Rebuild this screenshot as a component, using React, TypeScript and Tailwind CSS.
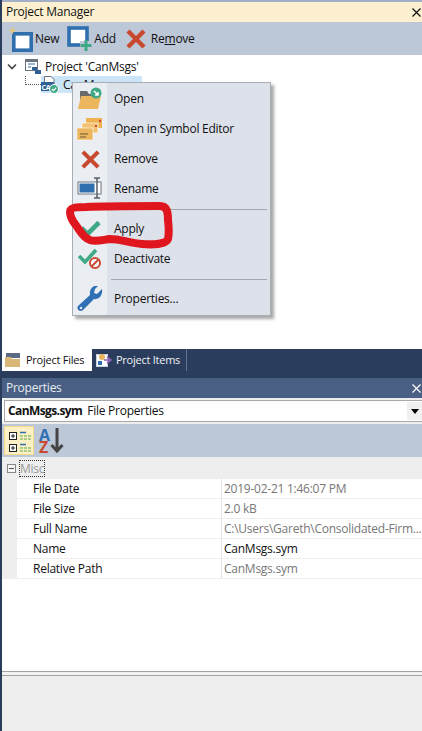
import React from "react";

const font = { fontFamily: '"Open Sans", "Noto Sans", sans-serif' };

function XIcon({ size = 22 }: { size?: number }) {
  return (
    <svg width={size} height={size} viewBox="0 0 22 22">
      <path d="M3 3 L19 19 M19 3 L3 19" stroke="#c8492f" strokeWidth="4.4" fill="none" />
    </svg>
  );
}

function NewIcon() {
  return (
    <svg width="26" height="26" viewBox="0 0 26 26">
      <rect x="5.8" y="7.8" width="17.4" height="16.4" fill="#fff" stroke="#2f6fae" strokeWidth="3.6" />
      <path d="M4.5 0.5 L5.6 3.4 L8.5 4.5 L5.6 5.6 L4.5 8.5 L3.4 5.6 L0.5 4.5 L3.4 3.4 Z" fill="#e7c77a" />
    </svg>
  );
}

function AddIcon() {
  return (
    <svg width="26" height="26" viewBox="0 0 26 26">
      <rect x="2" y="2" width="18" height="17" fill="#fff" stroke="#2f6fae" strokeWidth="3.6" />
      <rect x="13" y="15" width="12" height="10" fill="#bcc7d8" />
      <path d="M19 14 V25 M13.5 19.5 H24.5" stroke="#3fa884" strokeWidth="3" />
    </svg>
  );
}

function FolderOpenIcon() {
  return (
    <svg width="26" height="24" viewBox="0 0 26 24">
      <path d="M3 22 V4 H10 L12 7 H16 V22 Z" fill="#6b6b6b" />
      <path d="M1 22 L4 9 H24 L21 22 Z" fill="#ecb65f" />
      <circle cx="19" cy="6" r="5.5" fill="#3fa884" />
      <path d="M17 4 L21 8 M21 5 V8 H18" stroke="#fff" strokeWidth="1.4" fill="none" />
    </svg>
  );
}

function SymbolsIcon() {
  return (
    <svg width="26" height="24" viewBox="0 0 26 24">
      <rect x="9" y="1" width="16" height="10" fill="#efb04f" />
      <rect x="5" y="6" width="16" height="10" fill="#f2c272" stroke="#fff" strokeWidth="0.6" />
      <rect x="0" y="11" width="16" height="12" fill="#ecb65f" stroke="#fff" strokeWidth="0.6" />
      <path d="M3 17 H11 M3 20 H9" stroke="#6b5a35" strokeWidth="1" />
      <rect x="22" y="3" width="2" height="2" fill="#c8492f" />
      <rect x="18" y="8" width="2" height="2" fill="#c8492f" />
    </svg>
  );
}

function RenameIcon() {
  return (
    <svg width="26" height="24" viewBox="0 0 26 24">
      <rect x="1" y="5" width="23" height="12" fill="#fff" stroke="#6d7480" strokeWidth="1" />
      <rect x="2.5" y="6.5" width="15" height="9" fill="#2f6fae" />
      <path d="M17 1 H23 M20 1 V21 M17 21 H23" stroke="#5b5f66" strokeWidth="1.5" fill="none" />
    </svg>
  );
}

function CheckIcon() {
  return (
    <svg width="22" height="18" viewBox="0 0 22 18">
      <path d="M2.5 8 L8.5 14 L20 2.5" stroke="#3fa884" strokeWidth="4.6" fill="none" />
    </svg>
  );
}

function DeactivateIcon() {
  return (
    <svg width="24" height="22" viewBox="0 0 24 22">
      <path d="M1 8 L7 14 L18 2" stroke="#3fa884" strokeWidth="3.6" fill="none" />
      <circle cx="17" cy="15" r="5" fill="#fff" stroke="#c8492f" strokeWidth="2" />
      <path d="M13.5 18.5 L20.5 11.5" stroke="#c8492f" strokeWidth="2" />
    </svg>
  );
}

function WrenchIcon() {
  return (
    <svg width="26" height="26" viewBox="0 0 26 26">
      <path
        d="M25 3 L20 8 L17 7 L18 3 L21 0 C16 -1 12 3 13 9 L1 20 C-1 23 3 27 6 24 L17 13 C22 14 26 9 25 3 Z"
        fill="#2f6fb5"
      />
      <circle cx="4" cy="22" r="1.3" fill="#dde2ea" />
    </svg>
  );
}

function ProjectIcon() {
  return (
    <svg width="16" height="16" viewBox="0 0 16 16">
      <rect x="0.5" y="0.5" width="12" height="11" fill="#fff" stroke="#6d7480" />
      <rect x="1" y="1" width="11" height="2" fill="#6d7480" />
      <path d="M3 5 H10 M3 8 H6" stroke="#2f6fae" />
      <path d="M7 8 L12 8 L12 11 L16 11 L16 15 L10 15 L10 11 L7 11 Z" fill="#2f5f94" />
    </svg>
  );
}

function SymFileIcon() {
  return (
    <svg width="18" height="18" viewBox="0 0 18 18">
      <path d="M3.5 0.5 H10 L13 3.5 V10 H3.5 Z" fill="#fff" stroke="#6d7480" />
      <rect x="0" y="6" width="13" height="9" fill="#2f5f94" />
      <text x="0.5" y="13.5" fontSize="7" fontWeight="700" fill="#fff" style={font}>
        CAN
      </text>
      <circle cx="13" cy="13" r="4.5" fill="#3fa884" stroke="#fff" />
      <path d="M10.8 13 L12.5 14.7 L15.3 11.6" stroke="#fff" strokeWidth="1.2" fill="none" />
    </svg>
  );
}

function TabFilesIcon() {
  return (
    <svg width="16" height="16" viewBox="0 0 16 16">
      <rect x="1" y="1" width="14" height="5" fill="#5b6b85" />
      <path d="M0 5 H6 L7 7 H15 V15 H0 Z" fill="#d9b778" />
    </svg>
  );
}

function TabItemsIcon() {
  return (
    <svg width="16" height="16" viewBox="0 0 16 16">
      <rect x="0.5" y="2.5" width="11" height="12" fill="#fff" stroke="#c9d1dc" />
      <circle cx="6" cy="5" r="3" fill="#e8b45e" />
      <rect x="2" y="9" width="4" height="4" fill="#2f6fae" />
      <path d="M8 8 L15 8 M11 5 L15 8 L11 11" stroke="#8f62b5" strokeWidth="1.6" fill="none" />
    </svg>
  );
}

function CategorizedIcon() {
  return (
    <svg width="28" height="28" viewBox="0 0 28 28">
      <rect x="4.5" y="5.5" width="7" height="7" fill="#fff" stroke="#222" />
      <path d="M6 9 H10 M8 7 V11" stroke="#222" />
      <rect x="4.5" y="17.5" width="7" height="7" fill="#fff" stroke="#222" />
      <path d="M6 21 H10 M8 19 V23" stroke="#222" />
      <path d="M15 5.5 H21 M15 17.5 H21" stroke="#2f6fae" strokeWidth="1.4" />
      <path d="M15 9 H18 M19 9 H22 M23 9 H26 M15 12 H18 M19 12 H22 M23 12 H26 M15 21 H18 M19 21 H22 M23 21 H26 M15 24 H18 M19 24 H22 M23 24 H26" stroke="#5aa846" strokeWidth="1.2" />
    </svg>
  );
}

function SortIcon() {
  return (
    <svg width="14" height="25" viewBox="0 0 14 25" className="shrink-0">
      <path d="M7 0 V23 M1.5 17 L7 23 L12.5 17" stroke="#444" strokeWidth="3" fill="none" />
    </svg>
  );
}

function MenuRow({ icon, label }: { icon: React.ReactNode; label: string }) {
  return (
    <div className="flex h-[30px] items-center">
      <div className="flex w-[34px] shrink-0 items-center justify-center">{icon}</div>
      <span className="pl-[7px] text-[12px] text-[#111]">{label}</span>
    </div>
  );
}

function Separator() {
  return (
    <div className="flex h-[10px] items-center pl-[38px] pr-[3px]">
      <div className="h-px w-full bg-[#a3a8b0]" />
    </div>
  );
}

const rows: [string, string, string][] = [
  ["File Date", "2019-02-21 1:46:07 PM", "text-[#777]"],
  ["File Size", "2.0 kB", "text-[#777]"],
  ["Full Name", "C:\\Users\\Gareth\\Consolidated-Firm...", "text-[#777]"],
  ["Name", "CanMsgs.sym", "text-[#111]"],
  ["Relative Path", "CanMsgs.sym", "text-[#777]"],
];

export default function App() {
  return (
    <div
      className="relative flex h-[731px] w-[422px] flex-col overflow-hidden border-l-2 border-[#2b3d5c] bg-white text-[12px] tracking-[-0.25px] text-[#111]"
      style={font}
    >
      <div className="h-[2px] shrink-0 bg-[#a3afc6]" />
      <div className="flex h-[20px] shrink-0 items-center justify-between bg-[#fdf0d0] pl-1">
        <span>Project Manager</span>
        <svg width="9" height="9" viewBox="0 0 9 9" className="mr-[1px]">
          <path d="M0.5 0.5 L8.5 8.5 M8.5 0.5 L0.5 8.5" stroke="#111" strokeWidth="1.2" />
        </svg>
      </div>
      <div className="flex h-[33px] shrink-0 items-center bg-[#bcc7d8] pl-[6px]">
        <NewIcon />
        <span className="ml-[1px]">New</span>
        <div className="ml-[8px] flex items-center">
          <AddIcon />
          <span className="ml-[1px]">Add</span>
        </div>
        <div className="ml-[9px] flex items-center">
          <XIcon size={22} />
          <span className="ml-[4px]">
            Re<span className="underline">m</span>ove
          </span>
        </div>
      </div>

      <div className="relative h-[294px] shrink-0 bg-white">
        <div className="flex h-[21px] items-center pt-[2px]">
          <svg width="10" height="8" viewBox="0 0 10 8" className="ml-[5px]">
            <path d="M1 1.5 L5 5.5 L9 1.5" stroke="#444" strokeWidth="1.6" fill="none" />
          </svg>
          <div className="ml-[8px]"><ProjectIcon /></div>
          <span className="ml-[4px]">Project 'CanMsgs'</span>
        </div>
        <div className="flex h-[17px] items-center">
          <div className="ml-[23px] h-[9px] w-[16px] self-start border-b border-l border-dotted border-[#555]" />
          <div className="flex h-[17px] w-[101px] items-center bg-[#cce4f7]">
            <SymFileIcon />
            <span className="ml-[4px]">CanMsgs.sym</span>
          </div>
        </div>
      </div>

      <div className="flex h-[29px] shrink-0 items-start whitespace-nowrap bg-[#2b3d5c] text-[11px]">
        <div className="flex h-[22px] w-[90px] items-center bg-white pl-[3px]">
          <TabFilesIcon />
          <span className="ml-[5px]">Project Files</span>
        </div>
        <div className="flex h-[22px] w-[95px] items-center border-r border-[#5d7296] pl-[4px] text-[#eef1f6]">
          <TabItemsIcon />
          <span className="ml-[4px]">Project Items</span>
        </div>
      </div>

      <div className="flex h-[20px] shrink-0 items-center justify-between bg-[#4a5f84] pl-1 text-[#e8ecf3]">
        <span>Properties</span>
        <svg width="9" height="9" viewBox="0 0 9 9" className="mr-[1px]">
          <path d="M0.5 0.5 L8.5 8.5 M8.5 0.5 L0.5 8.5" stroke="#fff" strokeWidth="1.2" />
        </svg>
      </div>
      <div className="h-[2px] shrink-0 bg-[#eeeeee]" />
      <div className="ml-[2px] flex h-[22px] shrink-0 items-center justify-between border-y border-l border-[#a8a8a8] bg-white pl-[3px]">
        <span>
          <span className="font-bold tracking-[-0.6px]">CanMsgs.sym</span>
          <span className="ml-[5px]">File Properties</span>
        </span>
        <div className="flex h-[18px] w-[15px] items-center justify-center bg-[#f0f0f0]">
          <div className="h-0 w-0 border-x-[4px] border-t-[5px] border-x-transparent border-t-black" />
        </div>
      </div>
      <div className="h-[2px] shrink-0 bg-[#eeeeee]" />
      <div className="flex h-[33px] shrink-0 items-center bg-[#bcc7d8] pl-[2px]">
        <div className="flex h-[29px] w-[30px] items-center justify-center border border-[#f5d98c] bg-[#fdf0c4]">
          <CategorizedIcon />
        </div>
        <div className="ml-[5px] flex items-center">
          <div className="flex flex-col text-[16px] font-bold leading-[12px]">
            <span className="text-[#2f6fb5]">A</span>
            <span className="text-[#c8492f]">Z</span>
          </div>
          <SortIcon />
        </div>
      </div>

      <div className="flex h-[22px] shrink-0 items-center bg-[#eeeeee] pl-[5px]">
        <div className="flex h-[9px] w-[9px] items-center justify-center border border-[#888] bg-[#f5f5f5]">
          <div className="h-px w-[5px] bg-[#555]" />
        </div>
        <span className="ml-[3px] border border-dotted border-[#333] leading-[15px] text-[#999]">Misc</span>
      </div>
      <div className="shrink-0 border-l-[15px] border-[#eeeeee]">
        {rows.map(([k, v, c]) => (
          <div key={k} className="flex h-[20px] items-center border-b border-[#eeeeee]">
            <div className="h-full w-[204px] shrink-0 pl-[16px] leading-[19px]">{k}</div>
            <div className={`h-full flex-1 overflow-hidden whitespace-nowrap border-l border-[#e4e4e4] pl-[2px] leading-[19px] ${c}`}>{v}</div>
          </div>
        ))}
      </div>

      <div className="flex-1 bg-white" />
      <div className="h-[5px] shrink-0 border-y border-[#a3a3a3] bg-[#f2f2f2]" />
      <div className="h-[55px] shrink-0 bg-[#eeeeee]" />

      <div className="absolute left-[70px] top-[82px] w-[199px] border border-[#a9adb4] bg-[linear-gradient(to_right,#eaedf1_34px,#dde2ea_34px)] py-px shadow-[3px_3px_3px_rgba(0,0,0,0.35)]">
        <MenuRow icon={<FolderOpenIcon />} label="Open" />
        <MenuRow icon={<SymbolsIcon />} label="Open in Symbol Editor" />
        <MenuRow icon={<XIcon size={21} />} label="Remove" />
        <MenuRow icon={<RenameIcon />} label="Rename" />
        <Separator />
        <MenuRow icon={<CheckIcon />} label="Apply" />
        <MenuRow icon={<DeactivateIcon />} label="Deactivate" />
        <Separator />
        <MenuRow icon={<WrenchIcon />} label="Properties..." />
      </div>

      <svg
        width="110"
        height="52"
        viewBox="0 0 110 52"
        className="absolute left-[62px] top-[200px]"
      >
        <path
          d="M6 12 C6 7 14 7 22 7 C40 6 70 6 96 6 C103 6 104 12 104 20 C105 28 105 34 104 39 C102 44 90 45 78 44 C66 43 56 39 46 39 C38 40 32 42 26 40 C18 37 16 30 11 24 C8 20 6 16 6 12 Z"
          fill="none"
          stroke="#e0161e"
          strokeWidth="8"
          strokeLinejoin="round"
        />
      </svg>
    </div>
  );
}
